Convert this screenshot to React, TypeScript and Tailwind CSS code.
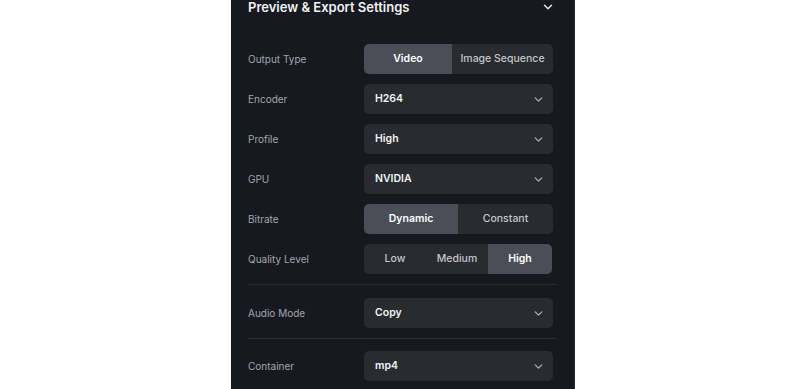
import React from "react";

const Chevron = ({ className }: { className?: string }) => (
  <svg viewBox="0 0 24 24" className={className} fill="none" stroke="currentColor" strokeWidth={2.5} strokeLinecap="round" strokeLinejoin="round">
    <path d="M6 9l6 6 6-6" />
  </svg>
);

const Label = ({ children }: { children: React.ReactNode }) => (
  <div className="w-[116px] shrink-0 text-[10px] text-[#a3a6ad]">{children}</div>
);

const Select = ({ value }: { value: string }) => (
  <div className="flex h-[30px] w-[189px] items-center justify-between rounded-[5px] bg-[#2a2b30] pl-[11px] pr-[8px]">
    <span className="text-[10.5px] font-semibold text-[#f2f2f4]">{value}</span>
    <Chevron className="h-[13px] w-[13px] text-[#a9abb1]" />
  </div>
);

const Segmented = ({ items, active, widths, total }: { items: string[]; active: number; widths: string[]; total: string }) => (
  <div className={`flex h-[30px] overflow-hidden rounded-[5px] bg-[#2a2b30] ${total}`}>
    {items.map((it, i) => (
      <div
        key={it}
        className={`flex items-center justify-center text-[10.5px] ${widths[i]} ${
          i === active ? "bg-[#4b4e56] font-semibold text-white" : "font-medium text-[#c3c5ca]"
        }`}
      >
        {it}
      </div>
    ))}
  </div>
);

const Row = ({ label, children }: { label: string; children: React.ReactNode }) => (
  <div className="flex items-center">
    <Label>{label}</Label>
    {children}
  </div>
);

export default function App() {
  return (
    <div className="flex h-[389px] w-[800px] overflow-hidden bg-white pl-[231px]" style={{ fontFamily: "Inter, 'Noto Sans', sans-serif" }}>
      <div className="flex h-full w-[344px] flex-col border-r border-[#2c2e35] bg-[#171920] px-[17px]">
        <div className="-mt-[1px] flex h-[16px] items-center justify-between pr-[2px]">
          <span className="text-[13px] font-semibold leading-[16px] text-[#f0f1f3]">Preview &amp; Export Settings</span>
          <Chevron className="h-[14px] w-[14px] text-[#e6e7ea]" />
        </div>
        <div className="mt-[29px] flex flex-col gap-[10px]">
          <Row label="Output Type">
            <Segmented items={["Video", "Image Sequence"]} active={0} widths={["w-[88px]", "w-[101px]"]} total="w-[189px]" />
          </Row>
          <Row label="Encoder">
            <Select value="H264" />
          </Row>
          <Row label="Profile">
            <Select value="High" />
          </Row>
          <Row label="GPU">
            <Select value="NVIDIA" />
          </Row>
          <Row label="Bitrate">
            <Segmented items={["Dynamic", "Constant"]} active={0} widths={["w-[94px]", "w-[95px]"]} total="w-[189px]" />
          </Row>
          <Row label="Quality Level">
            <Segmented items={["Low", "Medium", "High"]} active={2} widths={["w-[62px]", "w-[62px]", "w-[64px]"]} total="w-[188px]" />
          </Row>
        </div>
        <div className="mt-[10px] h-px bg-[#2a2c33]" />
        <div className="mt-[13px]">
          <Row label="Audio Mode">
            <Select value="Copy" />
          </Row>
        </div>
        <div className="mt-[10px] h-px bg-[#2a2c33]" />
        <div className="mt-[12px]">
          <Row label="Container">
            <Select value="mp4" />
          </Row>
        </div>
      </div>
    </div>
  );
}
